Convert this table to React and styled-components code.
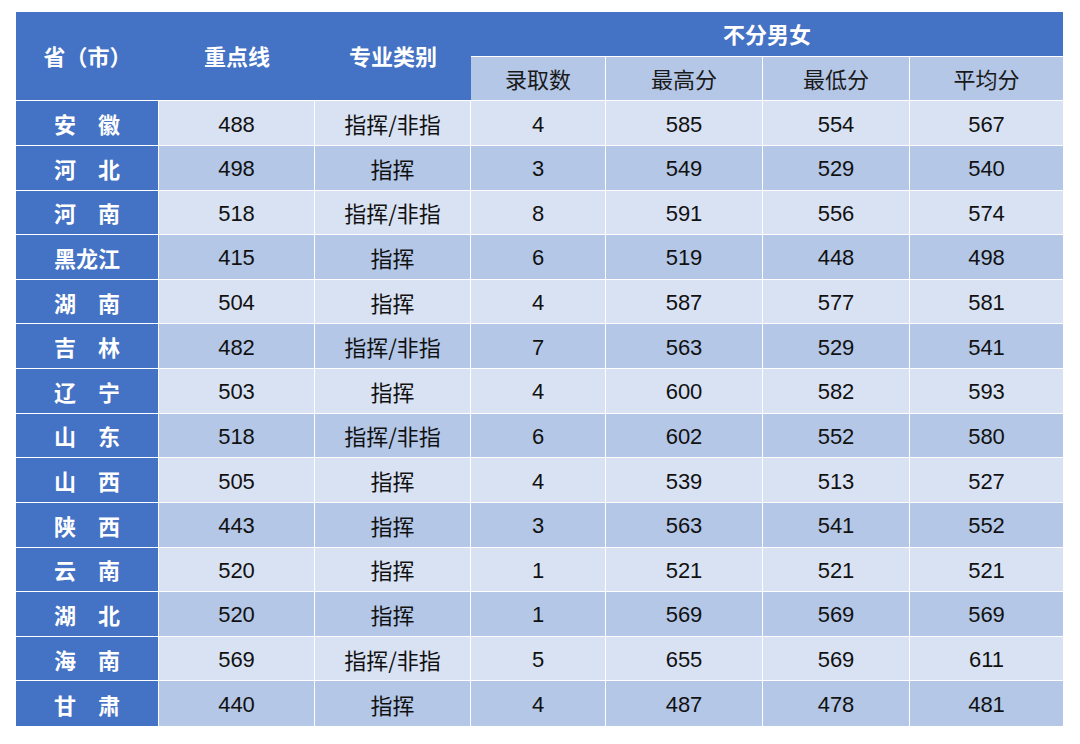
import React from 'react';
import styled, { createGlobalStyle } from 'styled-components';

const BLUE = '#4472c4';
const DARK = '#b4c7e7';
const LIGHT = '#d9e2f3';

const GlobalStyle = createGlobalStyle`
  html, body {
    margin: 0;
    padding: 0;
    background: #ffffff;
  }
  body {
    font-family: "Liberation Sans", "Noto Sans CJK SC", sans-serif;
  }
`;

const Page = styled.div`
  padding: 12px 16px;
`;

const Grid = styled.div`
  display: grid;
  grid-template-columns: 143px 156px 156px 135px 157px 147px 153px;
  grid-auto-rows: 44.625px;
  width: 1047px;
`;

// number cells sit a touch lower than the CJK ones
const Cell = styled.div`
  position: relative;
  box-sizing: border-box;
  display: flex;
  align-items: center;
  justify-content: center;
  padding-top: 3px;
  font-size: 22px;
  color: #111111;
  background: ${(p) => p.$bg};
  border-right: ${(p) => (p.$noRight ? 'none' : '1px solid #ffffff')};
  border-bottom: ${(p) => (p.$noBottom ? 'none' : '1px solid #ffffff')};
  grid-column: ${(p) => p.$col || 'auto'};
  grid-row: ${(p) => p.$row || 'auto'};
`;

const HeadCell = styled(Cell)`
  color: #ffffff;
  font-weight: 700;
  font-family: "Noto Sans CJK SC", sans-serif;
  padding-top: 0;
  padding-bottom: 2px;
  &::after {
    content: '';
    display: ${(p) => (p.$split ? 'block' : 'none')};
    position: absolute;
    right: -1px;
    bottom: 0;
    width: 1px;
    height: 50%;
    background: #ffffff;
  }
`;

const SubHead = styled(Cell)`
  font-family: "Noto Sans CJK SC", sans-serif;
  color: #1a1a1a;
  padding-top: 0;
`;

const Province = styled(Cell)`
  color: #ffffff;
  font-weight: 700;
  font-family: "Noto Sans CJK SC", sans-serif;
  padding-top: 0;
`;

const Kind = styled(Cell)`
  font-family: "Noto Sans CJK SC", sans-serif;
  padding-top: 0;
`;

const rows = [
  ['安　徽', 488, '指挥/非指', 4, 585, 554, 567],
  ['河　北', 498, '指挥', 3, 549, 529, 540],
  ['河　南', 518, '指挥/非指', 8, 591, 556, 574],
  ['黑龙江', 415, '指挥', 6, 519, 448, 498],
  ['湖　南', 504, '指挥', 4, 587, 577, 581],
  ['吉　林', 482, '指挥/非指', 7, 563, 529, 541],
  ['辽　宁', 503, '指挥', 4, 600, 582, 593],
  ['山　东', 518, '指挥/非指', 6, 602, 552, 580],
  ['山　西', 505, '指挥', 4, 539, 513, 527],
  ['陕　西', 443, '指挥', 3, 563, 541, 552],
  ['云　南', 520, '指挥', 1, 521, 521, 521],
  ['湖　北', 520, '指挥', 1, 569, 569, 569],
  ['海　南', 569, '指挥/非指', 5, 655, 569, 611],
  ['甘　肃', 440, '指挥', 4, 487, 478, 481],
];

const subHeads = ['录取数', '最高分', '最低分', '平均分'];

export default function App() {
  return (
    <Page>
      <GlobalStyle />
      <Grid>
        <HeadCell $bg={BLUE} $row="1 / 3" $col="1" $noRight $split>省（市）</HeadCell>
        <HeadCell $bg={BLUE} $row="1 / 3" $col="2" $noRight $split>重点线</HeadCell>
        <HeadCell $bg={BLUE} $row="1 / 3" $col="3" $noRight>专业类别</HeadCell>
        <HeadCell $bg={BLUE} $row="1" $col="4 / 8" $noRight>不分男女</HeadCell>
        {subHeads.map((h, i) => (
          <SubHead key={h} $bg={DARK} $noRight={i === subHeads.length - 1}>
            {h}
          </SubHead>
        ))}
        {rows.map((r, ri) => {
          const bg = ri % 2 === 0 ? LIGHT : DARK;
          const last = ri === rows.length - 1;
          return (
            <React.Fragment key={r[0]}>
              <Province $bg={BLUE} $noBottom={last}>{r[0]}</Province>
              <Cell $bg={bg} $noBottom={last}>{r[1]}</Cell>
              <Kind $bg={bg} $noBottom={last}>{r[2]}</Kind>
              <Cell $bg={bg} $noBottom={last}>{r[3]}</Cell>
              <Cell $bg={bg} $noBottom={last}>{r[4]}</Cell>
              <Cell $bg={bg} $noBottom={last}>{r[5]}</Cell>
              <Cell $bg={bg} $noBottom={last} $noRight>{r[6]}</Cell>
            </React.Fragment>
          );
        })}
      </Grid>
    </Page>
  );
}
